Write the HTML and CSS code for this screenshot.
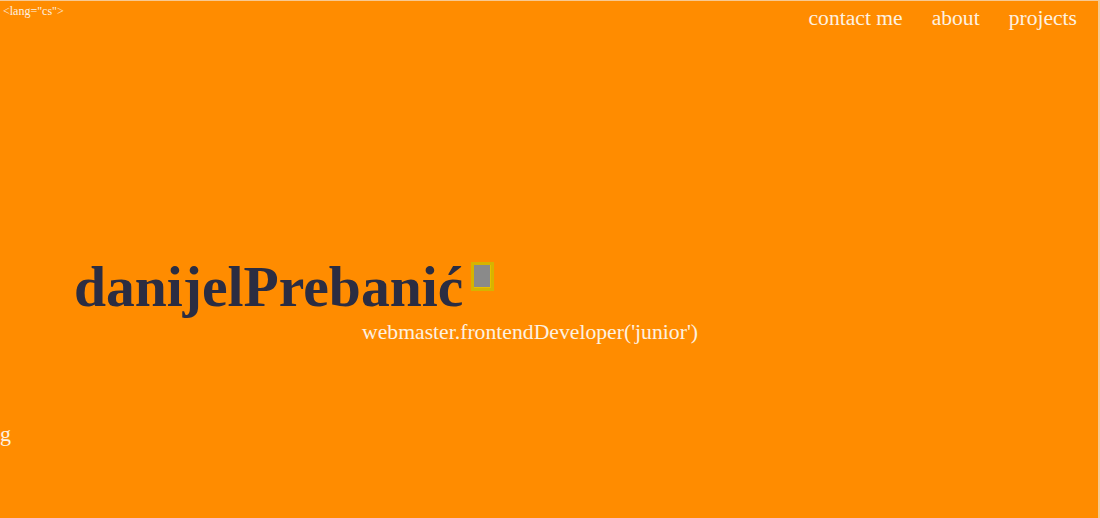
FILE: index.html
```html
<!DOCTYPE html>
<html lang="cs">
<head>
<meta charset="utf-8">
<title>danijelPrebanić</title>
<link rel="stylesheet" href="styles.css">
</head>
<body>
<div class="page">
  <header class="top">
    <div class="lang">&lt;lang="cs"&gt;</div>
    <nav class="nav">
      <a href="#">contact me</a>
      <a href="#">about</a>
      <a href="#">projects</a>
    </nav>
  </header>
  <main class="hero">
    <div class="title-row">
      <h1 class="title">danijelPrebanić</h1>
      <span class="avatar"><span class="avatar-img"></span></span>
    </div>
    <p class="subtitle">webmaster.frontendDeveloper('junior')</p>
  </main>
  <div class="stray">g</div>
</div>
</body>
</html>
```
FILE: styles.css
```css
html, body {
  margin: 0;
  padding: 0;
  height: 100%;
}
body {
  background: #ff8c00;
  font-family: "Liberation Serif", "Times New Roman", serif;
  color: #fdf1e0;
  overflow: hidden;
}
.page {
  height: 518px;
  box-sizing: border-box;
  border-top: 1px solid #f7c992;
  border-right: 2px solid #f7c992;
  display: flex;
  flex-direction: column;
}
.top {
  display: flex;
  justify-content: space-between;
  align-items: flex-start;
}
.lang {
  font-size: 12px;
  padding: 3px 0 0 3px;
}
.nav {
  display: flex;
  gap: 29px;
  padding: 5px 21px 0 0;
}
.nav a {
  color: #fdf1e0;
  text-decoration: none;
  font-size: 21.6px;
}
.hero {
  padding: 224px 0 0 74px;
}
.title-row {
  display: flex;
  align-items: flex-start;
  gap: 8px;
}
.title {
  margin: 0;
  font-size: 57.6px;
  font-weight: bold;
  color: #2b2d42;
  line-height: 64px;
}
.avatar {
  margin-top: 7px;
  width: 23px;
  height: 29px;
  box-sizing: border-box;
  border: 3px solid #d6b400;
  background: #e8c000;
  display: flex;
  padding: 0 1px 1px 0;
}
.avatar-img {
  flex: 1;
  background: #8a8a8a;
}
.subtitle {
  margin: 1px 0 0 288px;
  font-size: 21.7px;
  line-height: 24px;
}
.stray {
  margin-top: 78px;
  font-size: 22px;
  line-height: 24px;
}
```
